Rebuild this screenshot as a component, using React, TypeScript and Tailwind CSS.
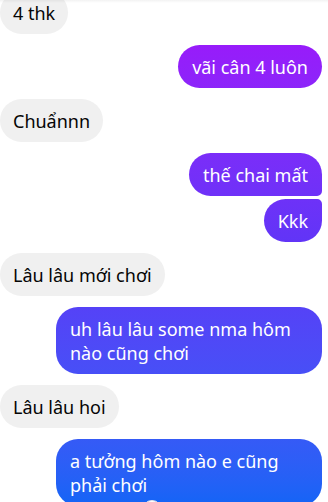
import React from "react";

type Msg = { text: string; me: boolean; gap: "group" | "tight"; pos?: "first" | "last" | "single" };

const msgs: Msg[] = [
  { text: "4 thk", me: false, gap: "group" },
  { text: "vãi cân 4 luôn", me: true, gap: "group" },
  { text: "Chuẩnnn", me: false, gap: "group" },
  { text: "thế chai mất", me: true, gap: "group", pos: "first" },
  { text: "Kkk", me: true, gap: "tight", pos: "last" },
  { text: "Lâu lâu mới chơi", me: false, gap: "group" },
  { text: "uh lâu lâu some nma hôm nào cũng chơi", me: true, gap: "group" },
  { text: "Lâu lâu hoi", me: false, gap: "group" },
  { text: "a tưởng hôm nào e cũng phải chơi", me: true, gap: "group" },
];

export default function App() {
  return (
    <div
      className="relative w-[328px] h-[502px] overflow-hidden bg-white"
      style={{ fontFamily: '"Segoe UI", "Noto Sans", sans-serif' }}
    >
      <div className="flex flex-col mt-[-9px] pr-[6px]">
        {msgs.map((m, i) => {
          const mt = i === 0 ? "" : m.gap === "tight" ? "mt-[3px]" : "mt-[11px]";
          let radius = "rounded-[22px]";
          if (m.pos === "first") radius = "rounded-[22px] rounded-br-[5px]";
          if (m.pos === "last") radius = "rounded-[22px] rounded-tr-[5px]";
          return (
            <div key={i} className={`flex ${m.me ? "justify-end" : "justify-start"} ${mt}`}>
              {m.me ? (
                <div
                  className={`relative max-w-[266px] px-[14px] py-[9.5px] text-[18px] leading-[24px] text-white bg-fixed bg-linear-to-b from-[#a30afb] via-[#5e35f7] to-[#1664f6] ${radius}`}
                >
                  {m.text}
                  {i === msgs.length - 1 && (
                    <div className="absolute left-[86px] bottom-[-14px] w-[20px] h-[20px] rounded-full bg-white border border-[#e4e4e4]" />
                  )}
                </div>
              ) : (
                <div className="max-w-[266px] px-[13px] py-[9.5px] text-[18px] leading-[24px] text-[#050505] bg-[#f0f0f0] rounded-[22px]">
                  {m.text}
                </div>
              )}
            </div>
          );
        })}
      </div>
      <div className="absolute top-0 left-0 right-0 h-[3px] bg-linear-to-b from-black/5 to-transparent" />
    </div>
  );
}
